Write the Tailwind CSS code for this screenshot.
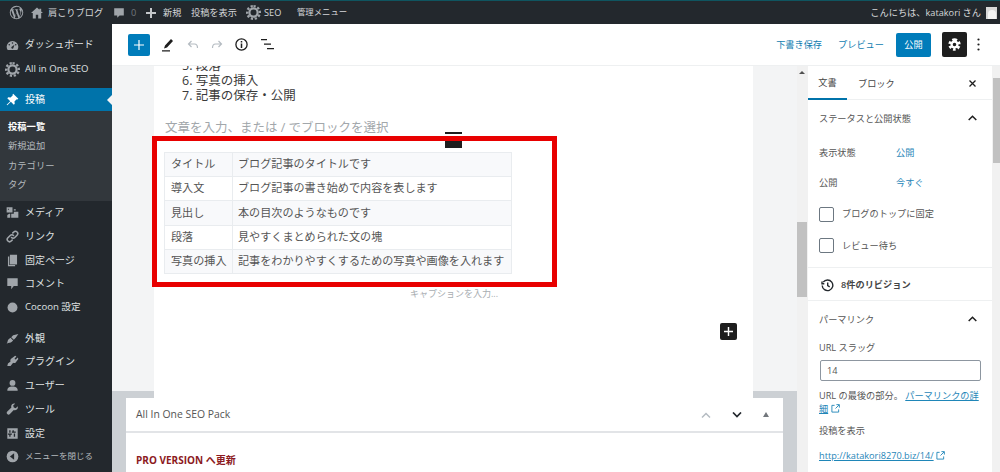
<!DOCTYPE html>
<html lang="ja">
<head>
<meta charset="UTF-8">
<script src="https://cdn.jsdelivr.net/npm/@tailwindcss/browser@4"></script>
<title>投稿を編集</title>
</head>
<body class="h-[472px] w-[1000px] overflow-hidden flex flex-col font-['Open_Sans','Noto_Sans_CJK_JP',sans-serif] text-[#444]">

<!-- admin bar -->
<header class="h-6 shrink-0 bg-[#23282d] border-t border-t-[#0f5560] flex items-center text-[9.2px] text-[#d5d7d9] relative">
  <svg class="absolute left-[9px] top-[4px] w-[15px] h-[15px]" viewBox="0 0 20 20" fill="#a0a5aa"><path d="M10 1a9 9 0 1 0 0 18 9 9 0 0 0 0-18zM2.3 10c0-1.1.2-2.2.7-3.1l3.7 10.1A7.7 7.7 0 0 1 2.3 10zm7.7 7.7c-.8 0-1.5-.1-2.2-.3l2.3-6.7 2.4 6.5v.1c-.8.3-1.6.4-2.5.4zm1.1-11.3c.5 0 .9-.1.9-.1.4 0 .4-.7 0-.7 0 0-1.2.1-2 .1-.7 0-2-.1-2-.1-.4 0-.5.7 0 .7 0 0 .4.1.8.1l1.2 3.3-1.7 5-2.8-8.3c.5 0 .9-.1.9-.1.4 0 .4-.7 0-.7 0 0-1.2.1-2 .1h-.5A7.7 7.7 0 0 1 15.200 4.300h-.1c-.7 0-1.300.7-1.300 1.400 0 .7.4 1.200.8 1.900.3.5.7 1.200.7 2.200 0 .7-.3 1.500-.6 2.600l-.8 2.700-2.800-8.700zm2.800 10.300l2.300-6.800c.4-1.100.6-2 .6-2.800 0-.3 0-.6-.1-.8a7.700 7.700 0 0 1-2.800 10.400z"/></svg>
  <svg class="absolute left-[31px] top-[6px] w-[12px] h-[12px]" viewBox="0 0 20 20" fill="#a0a5aa"><path d="M10 1 0 10h3v9h5v-6h4v6h5v-9h3l-3-2.700V3h-3v1.600z"/></svg>
  <span class="ml-[48px] w-[65px] shrink-0">肩こりブログ</span>
  <svg class="w-[12px] h-[12px] shrink-0" viewBox="0 0 20 20" fill="#a0a5aa"><path d="M2 2h16v12h-7l-4 4v-4H2z"/></svg>
  <span class="ml-[6px] w-[15px] shrink-0 text-[#72777c]">0</span>
  <svg class="w-[10px] h-[10px] shrink-0" viewBox="0 0 10 10" fill="#c4c7ca"><path d="M4 0h2v4h4v2H6v4H4V6H0V4h4z"/></svg>
  <span class="ml-[7px] w-[28px] shrink-0">新規</span>
  <span class="w-[55px] shrink-0">投稿を表示</span>
  <svg class="w-[15px] h-[15px] shrink-0" viewBox="0 0 20 20" fill="none" stroke="#a0a5aa"><circle cx="10" cy="10" r="5.500" stroke-width="3"/><path stroke-dasharray="3 2.340" stroke-width="3" d="M10 1.500a8.500 8.500 0 1 1 0 17 8.500 8.500 0 0 1 0-17z"/></svg>
  <span class="ml-[3px] w-[33px] shrink-0">SEO</span>
  <span class="text-[8.4px]">管理メニュー</span>
  <span class="ml-auto mr-[5px]">こんにちは、katakori さん</span>
  <div class="w-[11px] h-[12px] mr-[3px] bg-[#d8d8d8] flex items-end justify-center overflow-hidden">
    <div class="w-[8px] h-[9px] bg-[#f4f4f4] rounded-t-full"></div>
  </div>
</header>

<div class="flex flex-1 min-h-0">

  <!-- admin menu -->
  <aside class="w-[112px] shrink-0 bg-[#23282d] text-[#dfe0e1] text-[10px] flex flex-col pt-[9px]">
    <a class="h-[24px] flex items-center gap-[6px] pl-[6px]">
      <svg class="w-[13px] h-[13px]" viewBox="0 0 20 20" fill="#a0a5aa"><path d="M10 3a9 9 0 0 0-9 9c0 2 .6 3.700 1.600 5h14.800A8.900 8.900 0 0 0 19 12a9 9 0 0 0-9-9zm0 2a1.200 1.200 0 1 1 0 2.400A1.200 1.200 0 0 1 10 5zM5 7.500a1.200 1.200 0 1 1 0 2.400 1.200 1.200 0 0 1 0-2.400zm10 0a1.200 1.200 0 1 1 0 2.400 1.200 1.200 0 0 1 0-2.400zM10 15a1.800 1.800 0 0 1-.6-3.500L13 9l-1.500 4.500c-.2.900-.7 1.500-1.500 1.500z"/></svg>
      <span class="text-[9.800px]">ダッシュボード</span>
    </a>
    <a class="h-[24px] flex items-center gap-[5px] pl-[5px] text-[9.6px]">
      <svg class="w-[15px] h-[15px]" viewBox="0 0 20 20" fill="none" stroke="#a0a5aa"><circle cx="10" cy="10" r="5.500" stroke-width="3"/><path stroke-dasharray="3 2.340" stroke-width="3" d="M10 1.500a8.500 8.500 0 1 1 0 17 8.500 8.500 0 0 1 0-17z"/></svg>
      <span>All in One SEO</span>
    </a>
    <a class="mt-[7px] h-[23px] bg-[#0073aa] text-white flex items-center gap-[6px] pl-[6px] relative">
      <svg class="w-[13px] h-[13px]" viewBox="0 0 20 20" fill="#fff"><path d="M11 1l8 8-1.500 1-1-.5-3.500 3.500.5 3.500L12 18l-4.500-4.500L2 19l-1-1 5.500-5.500L2 8l1.500-1.500L7 7l3.500-3.500-.5-1z"/></svg>
      <span>投稿</span>
      <span class="absolute right-0 top-[7px] w-0 h-0 border-y-[5px] border-y-transparent border-r-[5px] border-r-[#f3f4f5]"></span>
    </a>
    <div class="bg-[#32373c] h-[90px] flex flex-col pt-[6px] text-[9.300px] text-[#b4b9be] pl-[8px]">
      <a class="h-[19.500px] flex items-center font-semibold text-white">投稿一覧</a>
      <a class="h-[19.500px] flex items-center">新規追加</a>
      <a class="h-[19.500px] flex items-center">カテゴリー</a>
      <a class="h-[19.500px] flex items-center">タグ</a>
    </div>
    <a class="h-[23.700px] flex items-center gap-[6px] pl-[6px]">
      <svg class="w-[13px] h-[13px]" viewBox="0 0 20 20" fill="#a0a5aa"><path d="M1 2h9v8H1zM3 4v2l2-1zM12 5h3v2h-3zM12 9h7v9H8v-6h4zM5 12h1.500v6H2v-4z"/></svg>
      <span>メディア</span>
    </a>
    <a class="h-[23.700px] flex items-center gap-[6px] pl-[6px]">
      <svg class="w-[13px] h-[13px]" viewBox="0 0 20 20" fill="none" stroke="#a0a5aa" stroke-width="2.400" stroke-linecap="round"><path d="M8.500 11.500a3.500 3.500 0 0 0 5 0l3.500-3.500a3.500 3.500 0 0 0-5-5l-1.500 1.500"/><path d="M11.500 8.500a3.500 3.500 0 0 0-5 0L3 12a3.500 3.500 0 0 0 5 5l1.500-1.500"/></svg>
      <span>リンク</span>
    </a>
    <a class="h-[23.700px] flex items-center gap-[6px] pl-[6px]">
      <svg class="w-[13px] h-[13px]" viewBox="0 0 20 20" fill="#a0a5aa"><path d="M6 1h11v15H6zM3 4h2v13h9v2H3z"/></svg>
      <span>固定ページ</span>
    </a>
    <a class="h-[23.700px] flex items-center gap-[6px] pl-[6px]">
      <svg class="w-[13px] h-[13px]" viewBox="0 0 20 20" fill="#a0a5aa"><path d="M2 2h16v12h-6l-4 5v-5H2z"/></svg>
      <span>コメント</span>
    </a>
    <a class="h-[23.700px] flex items-center gap-[7px] pl-[7px] text-[9.600px]">
      <svg class="w-[11px] h-[11px]" viewBox="0 0 20 20" fill="#a0a5aa"><circle cx="10" cy="10" r="9"/></svg>
      <span>Cocoon 設定</span>
    </a>
    <a class="mt-[7px] h-[23.700px] flex items-center gap-[6px] pl-[6px]">
      <svg class="w-[13px] h-[13px]" viewBox="0 0 20 20" fill="#a0a5aa"><path d="M19 3 11 5 8 8l4 4 3-3zM7 9l4 4-2 2c-2 2-5 1-8 3 2-3 1-5 3-7z"/></svg>
      <span>外観</span>
    </a>
    <a class="h-[23.700px] flex items-center gap-[6px] pl-[6px]">
      <svg class="w-[13px] h-[13px]" viewBox="0 0 20 20" fill="#a0a5aa"><path d="M14 1l2 1-3 4 2 1 3-3 1 2-3 4c-1 2-3 3-5 2l-4 5H2l1-4 4-3C6 8 7 6 9 5z"/></svg>
      <span>プラグイン</span>
    </a>
    <a class="h-[23.700px] flex items-center gap-[6px] pl-[6px]">
      <svg class="w-[13px] h-[13px]" viewBox="0 0 20 20" fill="#a0a5aa"><circle cx="10" cy="6" r="4.500"/><path d="M2 18c0-5 3-6.500 8-6.500s8 1.500 8 6.500z"/></svg>
      <span>ユーザー</span>
    </a>
    <a class="h-[23.700px] flex items-center gap-[6px] pl-[6px]">
      <svg class="w-[13px] h-[13px]" viewBox="0 0 20 20" fill="#a0a5aa"><path d="M18 5l-3 3-3-1-1-3 3-3c-3-1-6 1-6 4 0 1 0 1.500.3 2L2 13c-1.500 1.500-1 3 0 4s2.500 1.500 4 0l6-6.300c.5.300 1 .3 2 .3 3 0 5-3 4-6z"/></svg>
      <span>ツール</span>
    </a>
    <a class="h-[23.700px] flex items-center gap-[6px] pl-[6px]">
      <svg class="w-[13px] h-[13px]" viewBox="0 0 20 20" fill="#a0a5aa"><path fill-rule="evenodd" d="M2 2h16v16H2zM5 9h2V5H5zm0 6h2v-3h2v-2H3v2h2zm7-10h-2v2H9v2h6V7h-3zm0 10h2V10h-2z"/></svg>
      <span>設定</span>
    </a>
    <a class="h-[23.700px] flex items-center gap-[6px] pl-[6px] text-[8.500px] text-[#b4b9be]">
      <svg class="w-[13px] h-[13px]" viewBox="0 0 20 20"><circle cx="10" cy="10" r="9" fill="#a0a5aa"/><path d="M12.500 5v10L6 10z" fill="#23282d"/></svg>
      <span>メニューを閉じる</span>
    </a>
  </aside>

  <div class="flex-1 min-w-0 flex flex-col">

    <!-- editor toolbar -->
    <div class="h-[42px] shrink-0 bg-white flex items-center border-b border-b-[#eef0f1]">
      <button class="ml-[16px] w-[22px] h-[22px] bg-[#007cba] rounded-[2px] flex items-center justify-center">
        <svg class="w-[10px] h-[10px]" viewBox="0 0 10 10" fill="#fff"><path d="M4.400 0h1.200v4.400H10v1.200H5.600V10H4.400V5.600H0V4.400h4.400z"/></svg>
      </button>
      <svg class="ml-[11px] w-[14px] h-[14px]" viewBox="0 0 14 14" fill="#1e1e1e"><path d="M10 1l2 2-6 6.500-3 1 1-3zM1 12.300h8v1.200H1z"/></svg>
      <svg class="ml-[12px] w-[12px] h-[10px]" viewBox="0 0 12 10" fill="none" stroke="#b5bcc2" stroke-width="1.200"><path d="M4.500 1 1.500 4l3 3M1.500 4h6c2 0 3 1.500 3 4"/></svg>
      <svg class="ml-[12px] w-[12px] h-[10px]" viewBox="0 0 12 10" fill="none" stroke="#b5bcc2" stroke-width="1.200"><path d="M7.500 1l3 3-3 3M10.500 4h-6c-2 0-3 1.500-3 4"/></svg>
      <svg class="ml-[12px] w-[13px] h-[13px]" viewBox="0 0 13 13" fill="none" stroke="#1e1e1e" stroke-width="1.300"><circle cx="6.500" cy="6.500" r="5.600"/><path stroke-width="1.500" d="M6.500 5.500V10M6.500 3v1.400"/></svg>
      <svg class="ml-[13px] w-[13px] h-[11px]" viewBox="0 0 13 11" fill="#1e1e1e"><path d="M0 0h6v1.300H0zM3 4.500h7v1.300H3zM6 9h7v1.300H6z"/></svg>
      <span class="ml-auto text-[9.200px] text-[#0f7cb0]">下書き保存</span>
      <span class="ml-[16px] text-[9.200px] text-[#0f7cb0]">プレビュー</span>
      <button class="ml-[12px] w-[35px] h-[24px] bg-[#007cba] rounded-[2px] text-[9.200px] text-white">公開</button>
      <button class="ml-[11px] w-[25px] h-[25px] bg-[#1e1e1e] rounded-[2px] flex items-center justify-center">
        <svg class="w-[13px] h-[13px]" viewBox="0 0 20 20" fill="none" stroke="#fff"><circle cx="10" cy="10" r="4.500" stroke-width="3.500"/><path stroke-width="4" stroke-dasharray="4 3.070" d="M10 2.500a7.500 7.500 0 1 1 0 15 7.500 7.500 0 0 1 0-15z"/></svg>
      </button>
      <svg class="ml-[10px] mr-[20px] w-[3px] h-[13px]" viewBox="0 0 3 13" fill="#1e1e1e"><circle cx="1.500" cy="1.500" r="1.100"/><circle cx="1.500" cy="6.500" r="1.100"/><circle cx="1.500" cy="11.500" r="1.100"/></svg>
    </div>

    <div class="flex flex-1 min-h-0">

      <!-- content + meta boxes -->
      <div class="w-[685px] shrink-0 flex flex-col overflow-hidden">
        <div class="h-[325px] shrink-0 bg-[#f3f4f5] pl-[42px]">
          <div class="w-[599px] h-[332px] bg-white relative z-10">
            <div class="h-[39px] overflow-hidden flex flex-col justify-end pb-[2px] pl-[28px] text-[12.500px] leading-[15px] text-[#3a3a3a]">
              <p class="shrink-0">5. 段落</p>
              <p class="shrink-0">6. 写真の挿入</p>
              <p class="shrink-0">7. 記事の保存・公開</p>
            </div>
            <div class="h-[31px] flex items-end pl-[11px] text-[12.500px] leading-[17px] text-[#a2a7ab]">文章を入力、または / でブロックを選択</div>

            <div class="ml-[-2px] w-[405px] h-[151px] border-[5px] border-[#e80000] pt-[11px] pl-[7px] text-[11.100px] text-[#555]">
              <table class="w-[348px] border-collapse table-fixed">
                <tbody>
                  <tr class="h-[24.200px] bg-[#f8f9fb]"><td class="w-[68px] border border-[#e9ecef] pl-[6px]">タイトル</td><td class="border border-[#e9ecef] pl-[5px]">ブログ記事のタイトルです</td></tr>
                  <tr class="h-[24.200px]"><td class="border border-[#e9ecef] pl-[6px]">導入文</td><td class="border border-[#e9ecef] pl-[5px]">ブログ記事の書き始めで内容を表します</td></tr>
                  <tr class="h-[24.200px] bg-[#f8f9fb]"><td class="border border-[#e9ecef] pl-[6px]">見出し</td><td class="border border-[#e9ecef] pl-[5px]">本の目次のようなものです</td></tr>
                  <tr class="h-[24.200px]"><td class="border border-[#e9ecef] pl-[6px]">段落</td><td class="border border-[#e9ecef] pl-[5px]">見やすくまとめられた文の塊</td></tr>
                  <tr class="h-[24.200px] bg-[#f8f9fb]"><td class="border border-[#e9ecef] pl-[6px] whitespace-nowrap">写真の挿入</td><td class="border border-[#e9ecef] pl-[5px] whitespace-nowrap">記事をわかりやすくするための写真や画像を入れます</td></tr>
                </tbody>
              </table>
            </div>

            <div class="h-[14px] ml-[256px] text-[9px] leading-[14px] text-[#a8adb1]">キャプションを入力...</div>
            <div class="mt-[22px] mr-[16px] flex justify-end">
              <div class="w-[17px] h-[17px] bg-[#1e1e1e] rounded-[2px] flex items-center justify-center">
                <svg class="w-[9px] h-[9px]" viewBox="0 0 10 10" fill="#fff"><path d="M4.200 0h1.600v4.200H10v1.600H5.800V10H4.200V5.800H0V4.200h4.200z"/></svg>
              </div>
            </div>

            <!-- block mover: the red frame covers its middle -->
            <div class="absolute left-[291px] top-[66px] w-[17px] h-[4px] bg-white border-t-[2px] border-t-[#1e1e1e]"></div>
            <div class="absolute left-[291px] top-[75px] w-[17px] h-[7px] bg-[#1e1e1e]"></div>
          </div>
        </div>

        <div class="flex-1 bg-[#ccd0d4] pt-[7px] px-[14px]">
          <div class="bg-white h-full">
            <div class="h-[35px] flex items-center border-b-2 border-b-[#e2e4e7] pl-[10px] text-[10.400px] text-[#555]">
              <span>All In One SEO Pack</span>
              <svg class="ml-auto w-[10px] h-[6px]" viewBox="0 0 10 6" fill="none" stroke="#b5bcc2" stroke-width="1.500"><path d="M1 5.500l4-4 4 4"/></svg>
              <svg class="ml-[21px] w-[10px] h-[6px]" viewBox="0 0 10 6" fill="none" stroke="#23282d" stroke-width="1.700"><path d="M1 .5l4 4 4-4"/></svg>
              <span class="ml-[21px] mr-[14px] w-0 h-0 border-x-[3.500px] border-x-transparent border-b-[5px] border-b-[#72777c]"></span>
            </div>
            <p class="mt-[20px] pl-[10px] text-[10px] leading-[14px] font-bold text-[#8c1a22]">PRO VERSION へ更新</p>
          </div>
        </div>
      </div>

      <!-- editor scrollbar -->
      <div class="w-[11px] shrink-0 bg-[#f1f1f1] flex flex-col items-center pt-[5px] pr-px">
        <span class="w-0 h-0 border-x-[3px] border-x-transparent border-b-[3px] border-b-[#505050]"></span>
        <div class="mt-[148px] w-full h-[75px] bg-[#c1c1c1]"></div>
      </div>

      <!-- settings sidebar -->
      <aside class="w-[184px] shrink-0 bg-white text-[9.200px] text-[#555] flex flex-col overflow-hidden">
        <div class="h-[34px] shrink-0 flex border-b border-b-[#eef0f1] relative">
          <div class="w-[39px] flex items-center justify-center pt-[2px] text-[#444] border-b-[2px] border-b-[#0073aa] h-[34px]">文書</div>
          <div class="ml-[11px] flex items-center pt-[2px] text-[#444]">ブロック</div>
          <svg class="absolute left-[161px] top-[14px] w-[7px] h-[7px]" viewBox="0 0 7 7" stroke="#1e1e1e" stroke-width="1.300"><path d="M.5.500l6 6M6.500.500l-6 6"/></svg>
        </div>
        <div class="h-[168px] shrink-0 border-b border-b-[#eef0f1] pl-[11px] relative">
          <div class="h-[36px] flex items-center pt-[2px]">ステータスと公開状態</div>
          <svg class="absolute left-[160px] top-[15px] w-[9px] h-[6px]" viewBox="0 0 9 6" fill="none" stroke="#1e1e1e" stroke-width="1.500"><path d="M.7 5l3.800-3.800L8.300 5"/></svg>
          <div class="mt-[2px] h-[30px] flex items-center"><span class="w-[77px]">表示状態</span><span class="text-[#1f86b8]">公開</span></div>
          <div class="h-[30px] flex items-center"><span class="w-[77px]">公開</span><span class="text-[#1f86b8]">今すぐ</span></div>
          <div class="h-[32px] flex items-center"><span class="w-[15px] h-[15px] border border-[#6c7781] rounded-[2px]"></span><span class="ml-[8px]">ブログのトップに固定</span></div>
          <div class="h-[31px] flex items-center"><span class="w-[15px] h-[15px] border border-[#6c7781] rounded-[2px]"></span><span class="ml-[8px]">レビュー待ち</span></div>
        </div>
        <div class="h-[33px] shrink-0 border-b border-b-[#eef0f1] flex items-center pl-[13px] pt-[2px] font-semibold text-[#444]">
          <svg class="w-[13px] h-[13px]" viewBox="0 0 13 13" fill="none" stroke="#23282d" stroke-width="1.400"><path d="M2.200 3.200a5.300 5.300 0 1 1-1 3.300M1 2.500v2.300h2.300M6.700 3.500v3.200l2 1.200"/></svg>
          <span class="ml-[7px]">8件のリビジョン</span>
        </div>
        <div class="pl-[11px] pt-px relative">
          <div class="h-[35px] flex items-center">パーマリンク</div>
          <svg class="absolute left-[160px] top-[15px] w-[9px] h-[6px]" viewBox="0 0 9 6" fill="none" stroke="#1e1e1e" stroke-width="1.500"><path d="M.7 5l3.800-3.800L8.300 5"/></svg>
          <div class="mt-[4px] leading-[14px]">URL スラッグ</div>
          <div class="mt-[5px] w-[161px] h-[21px] border border-[#8d96a0] rounded-[2px] pl-[6px] flex items-center ml-px">14</div>
          <p class="mt-[8px] w-[165px] leading-[13px]">URL の最後の部分。 <span class="text-[#1f86b8] underline">パーマリンクの詳細</span>
            <svg class="inline-block w-[9px] h-[9px] align-[-1px]" viewBox="0 0 10 10" fill="none" stroke="#1f86b8" stroke-width="1"><path d="M4 1.500H1v7.500h7.500V6M6 .7h3.300V4M9 1 5 5"/></svg></p>
          <p class="mt-[9px] leading-[14px]">投稿を表示</p>
          <p class="mt-[11px] leading-[14px] text-[#1f86b8]"><span class="underline">http://katakori8270.biz/14/</span>
            <svg class="inline-block w-[9px] h-[9px] align-[-1px]" viewBox="0 0 10 10" fill="none" stroke="#1f86b8" stroke-width="1"><path d="M4 1.500H1v7.500h7.500V6M6 .7h3.300V4M9 1 5 5"/></svg></p>
        </div>
      </aside>

      <!-- sidebar scrollbar -->
      <div class="flex-1 bg-[#f1f1f1] flex flex-col items-end">
        <div class="mt-[12px] w-[7px] h-[85px] bg-[#c1c1c1]"></div>
      </div>
    </div>
  </div>
</div>
</body>
</html>
